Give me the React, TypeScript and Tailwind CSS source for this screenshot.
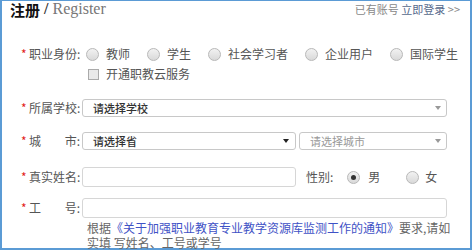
import React from 'react';

// radio circle, grey like the old IE look
const Radio = ({ checked = false }: { checked?: boolean }) => (
    <span className="flex h-[13px] w-[13px] shrink-0 items-center justify-center rounded-full border border-[#b8b8b8] bg-gradient-to-b from-[#f2f2f2] to-[#d9d9d9]">
        {checked && <span className="h-[5px] w-[5px] rounded-full bg-[#333]" />}
    </span>
);

const Arrow = ({ dark = false }: { dark?: boolean }) => (
    <svg
        width="6"
        height="4"
        viewBox="0 0 6 4"
        className="shrink-0"
    >
        <path
            d="M0 0 L6 0 L3 4 Z"
            fill={dark ? '#222' : '#999'}
        />
    </svg>
);

const Label = ({ children }: { children: React.ReactNode }) => (
    <div className="flex shrink-0 items-center">
        <span className="w-[8px] text-[12px] leading-none text-[#e2231a]">*</span>
        <div className="flex w-[51px] justify-between text-[12px] leading-[16px] whitespace-nowrap text-[#555]">
            {children}
        </div>
    </div>
);

const options = ['教师', '学生', '社会学习者', '企业用户', '国际学生'];

const App: React.FC = () => {
    return (
        <div
            className="h-[250px] w-[472px] border-2 border-t border-[#5b9bd5] bg-white"
            style={{ fontFamily: '"Noto Sans CJK SC", "Liberation Sans", sans-serif' }}
        >
            {/* header */}
            <div className="flex h-[16px] items-center justify-between pr-[10px] pl-[8px] whitespace-nowrap">
                <div className="flex items-center leading-none">
                    <span className="text-[15px] font-bold text-[#111]">注册</span>
                    <span
                        className="ml-[4px] text-[16px] text-[#777]"
                        style={{ fontFamily: '"Liberation Serif", serif' }}
                    >
                        <b className="text-[#333]">/</b> Register
                    </span>
                </div>
                <div className="text-[11px] leading-none text-[#888]">
                    已有账号 <span className="text-[#56698c]">立即登录</span> &gt;&gt;
                </div>
            </div>

            <div className="pl-[19px] whitespace-nowrap">
                {/* 职业身份 */}
                <div className="mt-[29px] flex h-[16px] items-center">
                    <Label>
                        <span>职业身份:</span>
                    </Label>
                    <div className="ml-[6px] flex items-center gap-[17px]">
                        {options.map((o) => (
                            <div
                                key={o}
                                className="flex items-center gap-[7px] text-[12px] text-[#555]"
                            >
                                <Radio />
                                <span>{o}</span>
                            </div>
                        ))}
                    </div>
                </div>
                <div className="mt-[4px] flex h-[16px] items-center pl-[67px] text-[12px] text-[#555]">
                    <span className="h-[11px] w-[11px] border border-[#aaa] bg-[#e9e9e9]" />
                    <span className="ml-[7px]">开通职教云服务</span>
                </div>

                {/* 所属学校 */}
                <div className="mt-[17px] flex items-center">
                    <Label>
                        <span>所属学校:</span>
                    </Label>
                    <div className="ml-[2px] flex h-[18px] w-[365px] items-center justify-between rounded-[3px] border border-[#c8c8c8] pr-[5px] pl-[10px] text-[11px] font-medium text-[#333]">
                        <span>请选择学校</span>
                        <Arrow />
                    </div>
                </div>

                {/* 城市 */}
                <div className="mt-[15px] flex items-center">
                    <Label>
                        <span>城</span>
                        <span>市:</span>
                    </Label>
                    <div className="ml-[2px] flex h-[18px] w-[214px] items-center justify-between rounded-[3px] border border-[#c8c8c8] pr-[6px] pl-[10px] text-[11px] font-medium text-[#333]">
                        <span>请选择省</span>
                        <Arrow dark />
                    </div>
                    <div className="ml-[3px] flex h-[18px] w-[148px] items-center justify-between rounded-[3px] border border-[#c8c8c8] pr-[5px] pl-[10px] text-[11px] text-[#999]">
                        <span>请选择城市</span>
                        <Arrow />
                    </div>
                </div>

                {/* 真实姓名 + 性别 */}
                <div className="mt-[17px] flex items-center">
                    <Label>
                        <span>真实姓名:</span>
                    </Label>
                    <div className="ml-[2px] h-[20px] w-[214px] rounded-[3px] border border-[#d6d6d6]" />
                    <span className="ml-[10px] text-[12px] text-[#555]">性别:</span>
                    <div className="ml-[14px] flex items-center gap-[8px] text-[12px] text-[#555]">
                        <Radio checked />
                        <span>男</span>
                    </div>
                    <div className="ml-[26px] flex items-center gap-[6px] text-[12px] text-[#555]">
                        <Radio />
                        <span>女</span>
                    </div>
                </div>

                {/* 工号 */}
                <div className="mt-[11px] flex items-center">
                    <Label>
                        <span>工</span>
                        <span>号:</span>
                    </Label>
                    <div className="ml-[2px] h-[20px] w-[365px] rounded-[3px] border border-[#d6d6d6]" />
                </div>
                <div className="mt-[2px] pl-[66px] text-[12px] leading-[15px] text-[#666]">
                    根据<span className="text-[#3f52c6]">《关于加强职业教育专业教学资源库监测工作的通知》</span>要求,请如
                    <br />
                    实填 写姓名、工号或学号
                </div>
            </div>
        </div>
    );
};

export default App;
